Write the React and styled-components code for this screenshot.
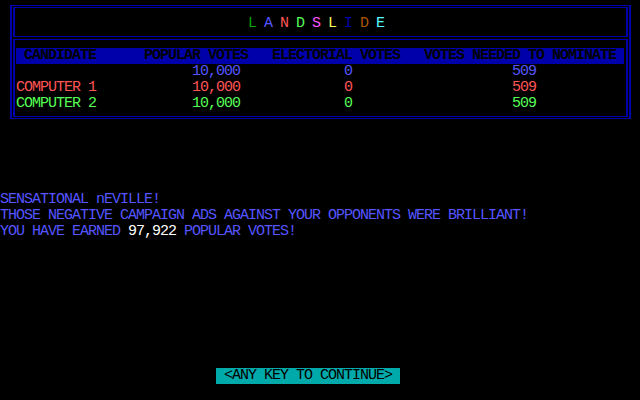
import React from "react";
import styled, { createGlobalStyle } from "styled-components";

const Global = createGlobalStyle`
  html, body { margin: 0; padding: 0; background: #000; }
  body { font-family: "Liberation Mono", "DejaVu Sans Mono", monospace; }
`;

const Screen = styled.div`
  width: 640px;
  height: 400px;
  background: #000;
  overflow: hidden;
  display: flex;
  flex-direction: column;
  font-family: "Liberation Mono", "DejaVu Sans Mono", monospace;
  font-size: 15px;
  letter-spacing: -1px;
  line-height: 16px;
  white-space: pre;
`;

const Frame = styled.div`
  margin: 5px 0 0 10px;
  width: 621px;
  box-sizing: border-box;
  border-style: solid;
  border-color: #0000aa;
  border-width: 1px 2px;
  padding: 1px;
  display: flex;
  flex-direction: column;
  gap: 2px;
`;

const Panel = styled.div`
  box-sizing: border-box;
  border-style: solid;
  border-color: #0000aa;
  border-width: 1px 2px;
`;

const TitlePanel = styled(Panel)`
  padding: 8px 0 4px 233px;
  display: flex;
  gap: 8px;
  height: 30px;
`;

const Letter = styled.span`
  display: inline-block;
  width: 8px;
  color: ${(p) => p.$color};
`;

const TablePanel = styled(Panel)`
  padding: 8px 2px 4px 1px;
  height: 78px;
`;

const Grid = styled.div`
  display: grid;
  grid-template-columns: 128px 128px 152px 200px;
  height: 16px;
  background: ${(p) => p.$bg || "transparent"};
  color: ${(p) => p.$color};
  font-weight: ${(p) => (p.$bold ? 700 : 400)};
`;

const Cell = styled.span`
  padding-left: ${(p) => (p.$indent || 0) * 8}px;
`;

const Messages = styled.div`
  margin-top: 73px;
  color: #5555ff;
  display: flex;
  flex-direction: column;
`;

const Line = styled.div`
  height: 16px;
`;

const Highlight = styled.span`
  color: #ffffff;
`;

const Continue = styled.div`
  margin: 128px 0 0 216px;
  align-self: flex-start;
  height: 16px;
  padding: 0 8px;
  background: #00aaaa;
  color: #000;
`;

const title = [
  ["L", "#00aa00"],
  ["A", "#5555ff"],
  ["N", "#ff5555"],
  ["D", "#55ff55"],
  ["S", "#ff55ff"],
  ["L", "#ffff55"],
  ["I", "#0000aa"],
  ["D", "#aa5500"],
  ["E", "#55ffff"],
];

const rows = [
  { name: "", color: "#5555ff" },
  { name: "COMPUTER 1", color: "#ff5555" },
  { name: "COMPUTER 2", color: "#55ff55" },
];

export default function App() {
  return (
    <Screen>
      <Global />
      <Frame>
        <TitlePanel>
          {title.map(([ch, c], i) => (
            <Letter key={i} $color={c}>
              {ch}
            </Letter>
          ))}
        </TitlePanel>
        <TablePanel>
          <Grid $bg="#0000aa" $color="#000" $bold>
            <Cell $indent={1}>CANDIDATE</Cell>
            <Cell>POPULAR VOTES</Cell>
            <Cell>ELECTORIAL VOTES</Cell>
            <Cell>VOTES NEEDED TO NOMINATE</Cell>
          </Grid>
          {rows.map((r, i) => (
            <Grid key={i} $color={r.color}>
              <Cell>{r.name}</Cell>
              <Cell $indent={6}>10,000</Cell>
              <Cell $indent={9}>0</Cell>
              <Cell $indent={11}>509</Cell>
            </Grid>
          ))}
        </TablePanel>
      </Frame>
      <Messages>
        <Line>SENSATIONAL nEVILLE!</Line>
        <Line>THOSE NEGATIVE CAMPAIGN ADS AGAINST YOUR OPPONENTS WERE BRILLIANT!</Line>
        <Line>
          YOU HAVE EARNED <Highlight>97,922</Highlight> POPULAR VOTES!
        </Line>
      </Messages>
      <Continue>&lt;ANY KEY TO CONTINUE&gt;</Continue>
    </Screen>
  );
}
